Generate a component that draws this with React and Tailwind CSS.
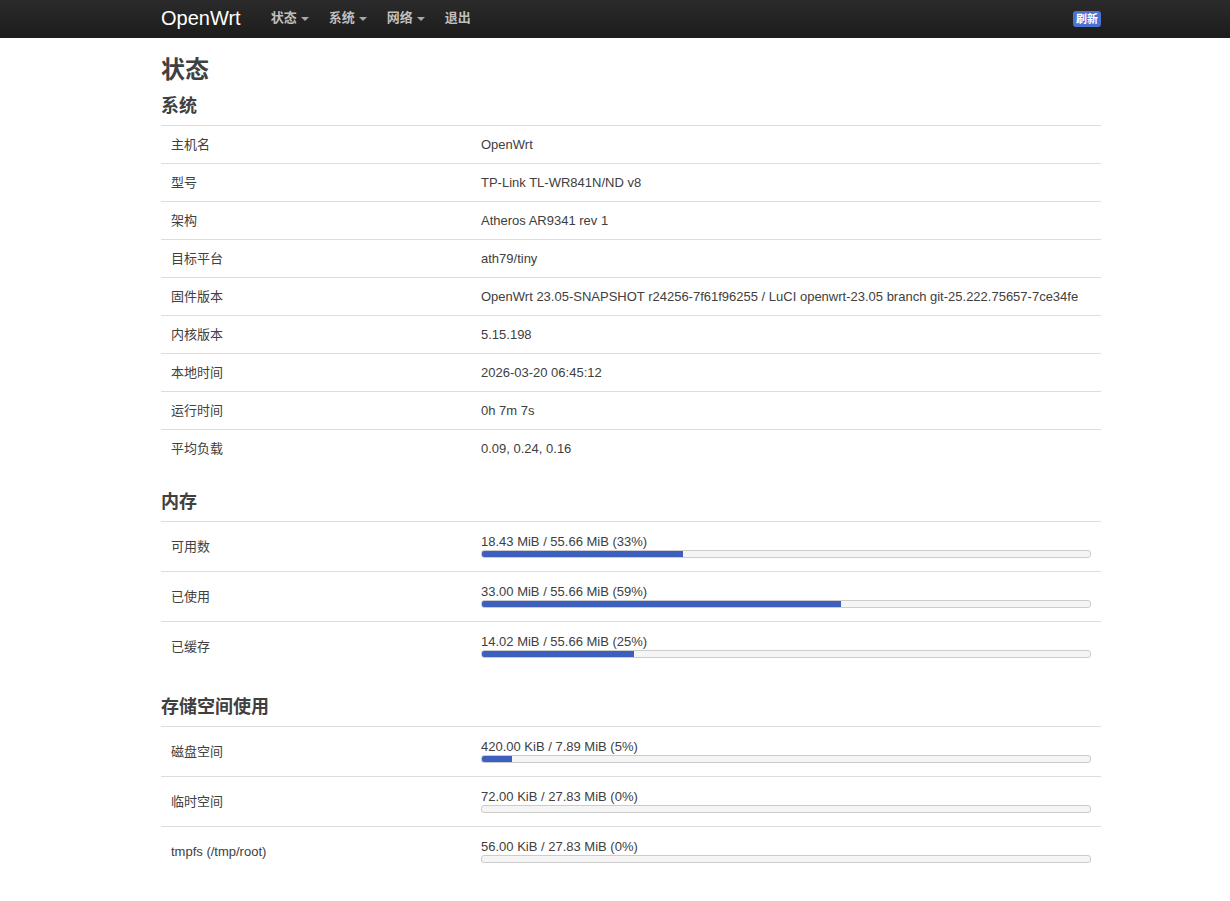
import React from 'react';

const font = { fontFamily: '"Liberation Sans", "Noto Sans CJK SC", Arial, sans-serif' };

const systemRows = [
  ['主机名', 'OpenWrt'],
  ['型号', 'TP-Link TL-WR841N/ND v8'],
  ['架构', 'Atheros AR9341 rev 1'],
  ['目标平台', 'ath79/tiny'],
  ['固件版本', 'OpenWrt 23.05-SNAPSHOT r24256-7f61f96255 / LuCI openwrt-23.05 branch git-25.222.75657-7ce34fe'],
  ['内核版本', '5.15.198'],
  ['本地时间', '2026-03-20 06:45:12'],
  ['运行时间', '0h 7m 7s'],
  ['平均负载', '0.09, 0.24, 0.16'],
];

const memoryRows = [
  ['可用数', '18.43 MiB / 55.66 MiB (33%)', 33],
  ['已使用', '33.00 MiB / 55.66 MiB (59%)', 59],
  ['已缓存', '14.02 MiB / 55.66 MiB (25%)', 25],
];

const storageRows = [
  ['磁盘空间', '420.00 KiB / 7.89 MiB (5%)', 5],
  ['临时空间', '72.00 KiB / 27.83 MiB (0%)', 0],
  ['tmpfs (/tmp/root)', '56.00 KiB / 27.83 MiB (0%)', 0],
];

const NavItem = ({ label, caret }) => (
  <a href="#" className="flex items-center px-[10px] text-[13px] font-bold text-[#bfbfbf] hover:text-white">
    {label}
    {caret && (
      <span className="ml-[4px] mt-[2px] inline-block w-0 h-0 border-l-[4px] border-r-[4px] border-t-[4px] border-l-transparent border-r-transparent border-t-[#a8a8a8]" />
    )}
  </a>
);

const Progress = ({ text, pct }) => (
  <div className="flex flex-col">
    <div className="leading-[17px]">{text}</div>
    <div className="h-[8px] w-full rounded-[3px] border border-[#ccc] bg-[#f5f5f5] overflow-hidden">
      <div className="h-full bg-[#3d5fbe]" style={{ width: `${pct}%` }} />
    </div>
  </div>
);

const Section = ({ title, top, children }) => (
  <>
    <h3 className={`${top} mb-[7px] text-[18px] leading-[24px] font-bold`}>{title}</h3>
    <div className="flex flex-col">{children}</div>
  </>
);

const BarRow = ({ k, v, p }) => (
  <div className="flex h-[50px] items-center border-t border-[#ddd]">
    <div className="w-[310px] px-[10px]">{k}</div>
    <div className="flex-1 px-[10px] pb-[3px]">
      <Progress text={v} pct={p} />
    </div>
  </div>
);

export default function App() {
  return (
    <div className="min-h-screen bg-white text-[#404040] text-[13px]" style={font}>
      <div className="h-[38px] bg-gradient-to-b from-[#2b2b2b] to-[#1c1c1c]">
        <div className="w-[940px] ml-[161px] flex items-center h-full">
          <a href="#" className="text-[20px] text-white mr-[20px] leading-[34px] pb-[3px]">OpenWrt</a>
          <nav className="flex items-center h-full pb-[3px]">
            <NavItem label="状态" caret />
            <NavItem label="系统" caret />
            <NavItem label="网络" caret />
            <NavItem label="退出" />
          </nav>
          <span className="ml-auto rounded-[3px] bg-[#4a72d0] px-[3px] text-[11px] leading-[16px] font-bold text-white">刷新</span>
        </div>
      </div>

      <div className="w-[940px] ml-[161px] pt-[16px] pb-[30px]">
        <h2 className="text-[24px] leading-[32px] font-bold">状态</h2>

        <Section title="系统" top="mt-[8px]">
          {systemRows.map(([k, v]) => (
            <div key={k} className="flex h-[38px] items-center border-t border-[#ddd]">
              <div className="w-[310px] px-[10px]">{k}</div>
              <div className="flex-1 px-[10px]">{v}</div>
            </div>
          ))}
        </Section>

        <Section title="内存" top="mt-[23px]">
          {memoryRows.map(([k, v, p]) => (
            <BarRow key={k} k={k} v={v} p={p} />
          ))}
        </Section>

        <Section title="存储空间使用" top="mt-[24px]">
          {storageRows.map(([k, v, p]) => (
            <BarRow key={k} k={k} v={v} p={p} />
          ))}
        </Section>
      </div>
    </div>
  );
}
